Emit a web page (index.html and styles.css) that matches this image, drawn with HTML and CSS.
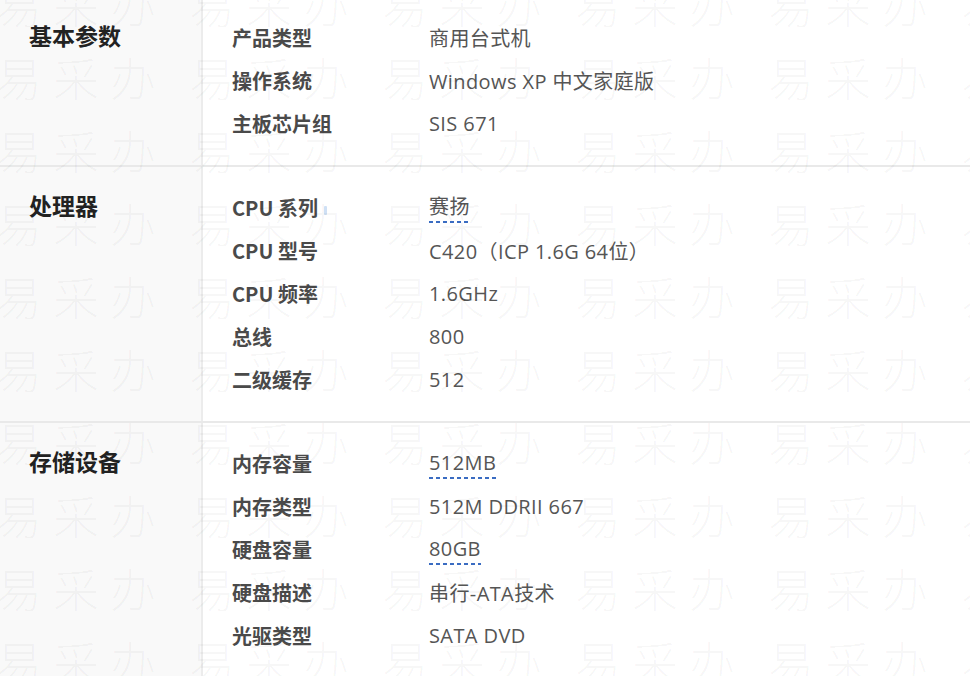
FILE: index.html
```html
<!DOCTYPE html>
<html lang="zh-CN">
<head>
<meta charset="utf-8">
<title>参数</title>
<link rel="stylesheet" href="styles.css">
</head>
<body>
<div class="spec">
  <section class="section">
    <h2 class="section-title">基本参数</h2>
    <div class="rows">
      <div class="row"><span class="label">产品类型</span><span class="value">商用台式机</span></div>
      <div class="row"><span class="label">操作系统</span><span class="value">Windows XP 中文家庭版</span></div>
      <div class="row"><span class="label">主板芯片组</span><span class="value">SIS 671</span></div>
    </div>
  </section>
  <section class="section">
    <h2 class="section-title">处理器</h2>
    <div class="rows">
      <div class="row"><span class="label">CPU 系列<i class="hint"></i></span><span class="value"><span class="dashed">赛扬</span></span></div>
      <div class="row"><span class="label">CPU 型号</span><span class="value">C420（ICP 1.6G 64位）</span></div>
      <div class="row"><span class="label">CPU 频率</span><span class="value">1.6GHz</span></div>
      <div class="row"><span class="label">总线</span><span class="value">800</span></div>
      <div class="row"><span class="label">二级缓存</span><span class="value">512</span></div>
    </div>
  </section>
  <section class="section last">
    <h2 class="section-title">存储设备</h2>
    <div class="rows">
      <div class="row"><span class="label">内存容量</span><span class="value"><span class="dashed">512MB</span></span></div>
      <div class="row"><span class="label">内存类型</span><span class="value">512M DDRII 667</span></div>
      <div class="row"><span class="label">硬盘容量</span><span class="value"><span class="dashed">80GB</span></span></div>
      <div class="row"><span class="label">硬盘描述</span><span class="value">串行-ATA技术</span></div>
      <div class="row"><span class="label">光驱类型</span><span class="value">SATA DVD</span></div>
    </div>
  </section>

  <div class="watermark" aria-hidden="true">
    <div class="wm-row"><span class="wm">易采办</span><span class="wm">易采办</span><span class="wm">易采办</span><span class="wm">易采办</span><span class="wm">易采办</span><span class="wm">易采办</span></div>
    <div class="wm-row"><span class="wm">易采办</span><span class="wm">易采办</span><span class="wm">易采办</span><span class="wm">易采办</span><span class="wm">易采办</span><span class="wm">易采办</span></div>
    <div class="wm-row"><span class="wm">易采办</span><span class="wm">易采办</span><span class="wm">易采办</span><span class="wm">易采办</span><span class="wm">易采办</span><span class="wm">易采办</span></div>
    <div class="wm-row"><span class="wm">易采办</span><span class="wm">易采办</span><span class="wm">易采办</span><span class="wm">易采办</span><span class="wm">易采办</span><span class="wm">易采办</span></div>
    <div class="wm-row"><span class="wm">易采办</span><span class="wm">易采办</span><span class="wm">易采办</span><span class="wm">易采办</span><span class="wm">易采办</span><span class="wm">易采办</span></div>
    <div class="wm-row"><span class="wm">易采办</span><span class="wm">易采办</span><span class="wm">易采办</span><span class="wm">易采办</span><span class="wm">易采办</span><span class="wm">易采办</span></div>
    <div class="wm-row"><span class="wm">易采办</span><span class="wm">易采办</span><span class="wm">易采办</span><span class="wm">易采办</span><span class="wm">易采办</span><span class="wm">易采办</span></div>
    <div class="wm-row"><span class="wm">易采办</span><span class="wm">易采办</span><span class="wm">易采办</span><span class="wm">易采办</span><span class="wm">易采办</span><span class="wm">易采办</span></div>
    <div class="wm-row"><span class="wm">易采办</span><span class="wm">易采办</span><span class="wm">易采办</span><span class="wm">易采办</span><span class="wm">易采办</span><span class="wm">易采办</span></div>
    <div class="wm-row"><span class="wm">易采办</span><span class="wm">易采办</span><span class="wm">易采办</span><span class="wm">易采办</span><span class="wm">易采办</span><span class="wm">易采办</span></div>
    <div class="wm-row"><span class="wm">易采办</span><span class="wm">易采办</span><span class="wm">易采办</span><span class="wm">易采办</span><span class="wm">易采办</span><span class="wm">易采办</span></div>
  </div>
</div>
</body>
</html>
```

FILE: styles.css
```css
* { box-sizing: border-box; }

html, body {
  margin: 0;
  padding: 0;
  background: #ffffff;
  overflow: hidden;
}

body {
  font-family: "Open Sans", "Noto Sans CJK SC", "Noto Sans", sans-serif;
  color: #555555;
}

.spec {
  position: relative;
  margin-top: -3px;
  width: 970px;
  overflow: hidden;
}

.section {
  display: flex;
  border-bottom: 2px solid #e9e9e9;
}

.section.last {
  border-bottom: none;
  min-height: 260px;
}

.section-title {
  width: 203px;
  flex: none;
  margin: 0;
  padding: 22px 0 0 29px;
  background: #f9f9f9;
  border-right: 2px solid #ececec;
  font-family: "Noto Sans CJK SC", sans-serif;
  font-size: 23px;
  font-weight: 700;
  line-height: 32px;
  color: #222222;
}

.rows {
  flex: 1;
  padding: 19px 0 20px 29px;
}

.row {
  display: flex;
  align-items: center;
  height: 43px;
}

.label {
  width: 197px;
  flex: none;
  font-family: "Noto Sans CJK SC", sans-serif;
  font-size: 20px;
  font-weight: 700;
  color: #4a4a4a;
  white-space: nowrap;
}

.hint {
  display: inline-block;
  width: 3px;
  height: 9px;
  margin-left: 6px;
  background: #cfe0f5;
  border-radius: 1px;
  vertical-align: middle;
}

.value {
  font-size: 20px;
  letter-spacing: 0.4px;
  color: #555555;
  white-space: nowrap;
}

.dashed {
  display: inline-block;
  padding-bottom: 4px;
  background-image: repeating-linear-gradient(to right, #3a6cc2 0 4px, transparent 4px 7px);
  background-size: 100% 2px;
  background-repeat: no-repeat;
  background-position: left bottom;
  line-height: 24px;
}

.watermark {
  position: absolute;
  top: -30px;
  left: -4px;
  right: 0;
  bottom: 0;
  pointer-events: none;
  font-family: "Noto Sans CJK SC", sans-serif;
  font-weight: 300;
  color: rgba(0, 0, 0, 0.035);
  font-size: 46px;
  line-height: 73px;
  white-space: nowrap;
}

.wm-row {
  height: 73px;
}

.wm {
  display: inline-block;
  width: 193px;
  letter-spacing: 11px;
}
```
